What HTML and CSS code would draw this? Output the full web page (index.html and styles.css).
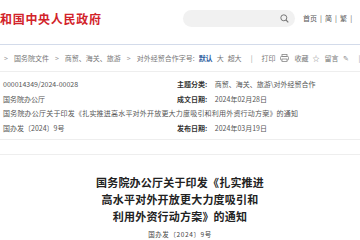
FILE: index.html
```html
<!DOCTYPE html>
<html>
<head>
    <meta charset="utf-8">
    <link rel="stylesheet" href="styles.css">
</head>
<body>
    <div class="page">
        <div class="header">
            <div class="site-title">和国中央人民政府</div>
            <div class="search">
                <svg class="search-icon" width="9" height="9" viewBox="0 0 9 9">
                    <circle cx="3.8" cy="3.8" r="3" fill="none" stroke="#777" stroke-width="1"/>
                    <line x1="6" y1="6" x2="8.3" y2="8.3" stroke="#777" stroke-width="1.1"/>
                </svg>
            </div>
            <div class="top-links">首页 <span class="sep">|</span> 简 <span class="sep">|</span> 繁 <span class="sep">|</span></div>
        </div>

        <div class="toolbar">
            <div class="crumbs">
                <span class="arrow">&gt;</span><span>国务院文件</span>
                <span class="arrow">&gt;</span><span>商贸、海关、旅游</span>
                <span class="arrow">&gt;</span><span>对外经贸合作</span>
            </div>
            <div class="tools">
                <span>字号:</span><b class="active">默认</b><span>大</span><span>超大</span>
                <span class="sep">|</span>
                <span>打印</span>
                <svg width="9" height="8" viewBox="0 0 9 8">
                    <rect x="2" y="0.5" width="5" height="2" fill="none" stroke="#888" stroke-width="0.8"/>
                    <rect x="0.5" y="2.5" width="8" height="3.5" rx="0.8" fill="none" stroke="#888" stroke-width="0.8"/>
                    <rect x="2" y="5" width="5" height="2.5" fill="#fff" stroke="#888" stroke-width="0.8"/>
                </svg>
                <span class="gap">收藏</span><span class="glyph">☆</span>
                <span>留言</span><span class="glyph">✎</span>
                <span class="sep">|</span>
            </div>
        </div>

        <div class="info">
            <div class="cell">000014349/2024-00028</div>
            <div class="cell"><b>主题分类:</b> 商贸、海关、旅游\对外经贸合作</div>
            <div class="cell">国务院办公厅</div>
            <div class="cell"><b>成文日期:</b> 2024年02月28日</div>
            <div class="cell wide">国务院办公厅关于印发《扎实推进高水平对外开放更大力度吸引和利用外资行动方案》的通知</div>
            <div class="cell">国办发〔2024〕9号</div>
            <div class="cell"><b>发布日期:</b> 2024年03月19日</div>
        </div>
        <div class="spacer"></div>

        <div class="article">
            <h1>国务院办公厅关于印发《扎实推进<br>高水平对外开放更大力度吸引和<br>利用外资行动方案》的通知</h1>
            <div class="doc-no">国办发〔2024〕9号</div>
        </div>
    </div>
</body>
</html>
```

FILE: styles.css
```css
body {
    margin: 0;
    background: #fff;
    font-family: "Noto Sans CJK SC", "Noto Sans", sans-serif;
    color: #333;
}

.page {
    width: 360px;
    overflow: hidden;
}

.header {
    display: flex;
    align-items: center;
    height: 44px;
    border-bottom: 1px solid #d3dbea;
}

.site-title {
    width: 183px;
    font-size: 12px;
    font-weight: bold;
    letter-spacing: 0.7px;
    color: #d2232a;
    white-space: nowrap;
    margin-top: -8px;
}

.search {
    width: 112px;
    height: 17px;
    border-radius: 9px;
    background: #f1f1f1;
    display: flex;
    align-items: center;
    justify-content: flex-end;
    padding-right: 6px;
    box-sizing: border-box;
    margin-top: -8px;
}

.top-links {
    margin-left: 8px;
    margin-top: -8px;
    font-size: 7px;
    color: #555;
    white-space: nowrap;
}

.top-links .sep {
    margin: 0 1.5px;
}

.toolbar {
    display: flex;
    align-items: center;
    height: 26px;
    border-bottom: 1px solid #eee;
    font-size: 7px;
    color: #777;
    white-space: nowrap;
}

.crumbs {
    display: flex;
    align-items: center;
    gap: 6px;
    width: 180px;
    padding-left: 4px;
    box-sizing: border-box;
}

.crumbs .arrow {
    color: #999;
}

.tools {
    display: flex;
    align-items: center;
    gap: 4px;
}

.tools .active {
    color: #2b5c9e;
}

.tools .sep {
    margin: 0 5px;
    color: #999;
}

.tools .gap {
    margin-left: 2px;
}

.tools .glyph {
    margin-right: 1px;
    color: #888;
}

.info {
    display: grid;
    grid-template-columns: 174px 1fr;
    padding: 5px 0 0 3px;
    font-size: 7px;
    line-height: 14.6px;
    color: #555;
    white-space: nowrap;
}

.info b {
    color: #333;
    margin-right: 6px;
}

.info .wide {
    grid-column: 1 / 3;
    letter-spacing: 0.2px;
}

.spacer {
    height: 14px;
    margin-top: 4px;
    border-top: 1px solid #eee;
    border-bottom: 1px solid #eee;
}

.article {
    text-align: center;
    padding-top: 19px;
}

.article h1 {
    margin: 0;
    font-size: 11px;
    line-height: 17px;
    font-weight: bold;
    color: #222;
    letter-spacing: 0.2px;
}

.doc-no {
    margin-top: 4px;
    font-size: 6.5px;
    color: #444;
    letter-spacing: 0.6px;
}
```
